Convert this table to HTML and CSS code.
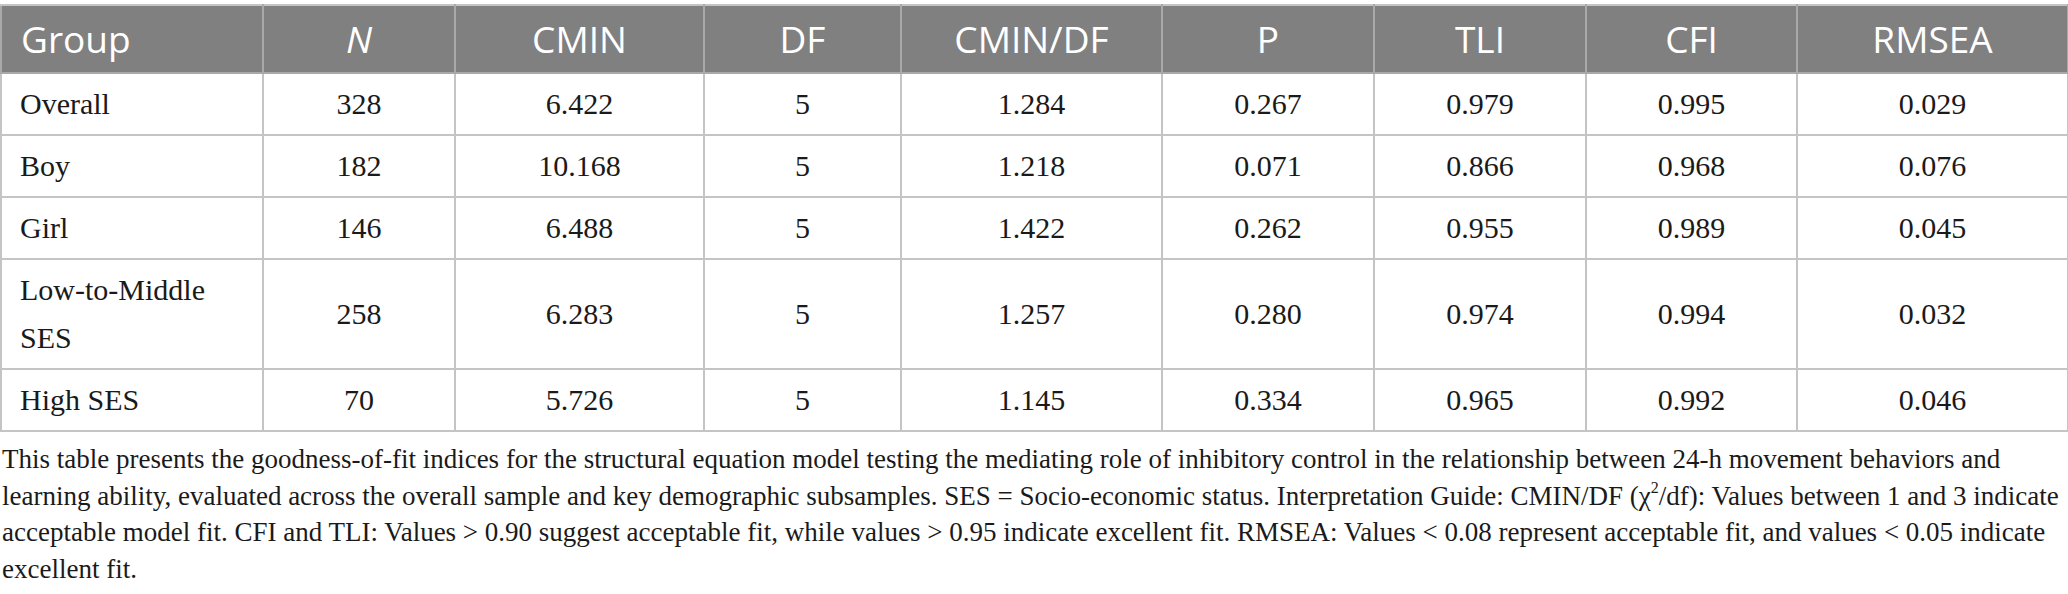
FILE: index.html
```html
<!DOCTYPE html>
<html>
<head>
<meta charset="utf-8">
<link rel="stylesheet" href="styles.css">
</head>
<body>
<div class="page">
<table class="fit-table">
  <colgroup>
    <col class="c-group"><col class="c-n"><col class="c-cmin"><col class="c-df"><col class="c-cmindf"><col class="c-p"><col class="c-tli"><col class="c-cfi"><col class="c-rmsea">
  </colgroup>
  <thead>
    <tr>
      <th class="left">Group</th>
      <th><i>N</i></th>
      <th>CMIN</th>
      <th>DF</th>
      <th>CMIN/DF</th>
      <th>P</th>
      <th>TLI</th>
      <th>CFI</th>
      <th>RMSEA</th>
    </tr>
  </thead>
  <tbody>
    <tr><td class="left">Overall</td><td>328</td><td>6.422</td><td>5</td><td>1.284</td><td>0.267</td><td>0.979</td><td>0.995</td><td>0.029</td></tr>
    <tr><td class="left">Boy</td><td>182</td><td>10.168</td><td>5</td><td>1.218</td><td>0.071</td><td>0.866</td><td>0.968</td><td>0.076</td></tr>
    <tr><td class="left">Girl</td><td>146</td><td>6.488</td><td>5</td><td>1.422</td><td>0.262</td><td>0.955</td><td>0.989</td><td>0.045</td></tr>
    <tr><td class="left narrow">Low-to-Middle SES</td><td>258</td><td>6.283</td><td>5</td><td>1.257</td><td>0.280</td><td>0.974</td><td>0.994</td><td>0.032</td></tr>
    <tr><td class="left">High SES</td><td>70</td><td>5.726</td><td>5</td><td>1.145</td><td>0.334</td><td>0.965</td><td>0.992</td><td>0.046</td></tr>
  </tbody>
</table>
<p class="caption">This table presents the goodness-of-fit indices for the structural equation model testing the mediating role of inhibitory control in the relationship between 24-h movement behaviors and<br>learning ability, evaluated across the overall sample and key demographic subsamples. SES = Socio-economic status. Interpretation Guide: CMIN/DF (χ<sup>2</sup>/df): Values between 1 and 3 indicate<br>acceptable model fit. CFI and TLI: Values &gt; 0.90 suggest acceptable fit, while values &gt; 0.95 indicate excellent fit. RMSEA: Values &lt; 0.08 represent acceptable fit, and values &lt; 0.05 indicate<br>excellent fit.</p>
</div>
</body>
</html>
```

FILE: styles.css
```css
html, body {
  margin: 0;
  padding: 0;
  background: #ffffff;
}

.page {
  padding-top: 4px;
  width: 2068px;
}

.fit-table {
  width: 2067px;
  border-collapse: collapse;
  table-layout: fixed;
  border: 2px solid #c4c4c4;
}

.c-group { width: 262px; }
.c-n { width: 192px; }
.c-cmin { width: 249px; }
.c-df { width: 197px; }
.c-cmindf { width: 261px; }
.c-p { width: 212px; }
.c-tli { width: 212px; }
.c-cfi { width: 211px; }
.c-rmsea { width: 271px; }

.fit-table th {
  background: #808080;
  color: #ffffff;
  font-family: "Open Sans", "Noto Sans", sans-serif;
  font-weight: 400;
  font-size: 37px;
  line-height: 54px;
  padding: 6px 8px 6px 8px;
  text-align: center;
  border: 2px solid #a9a9a9;
  border-top: 2px solid #c4c4c4;
}

.fit-table th i {
  font-style: italic;
}

.fit-table td {
  font-family: "Liberation Serif", "Times New Roman", serif;
  font-size: 30px;
  line-height: 48px;
  color: #1a1a1a;
  padding: 6px 8px;
  text-align: center;
  border: 2px solid #c4c4c4;
}

.fit-table .left {
  text-align: left;
  padding-left: 18px;
}

.fit-table th.left {
  padding-left: 19px;
}

.caption {
  margin: 9px 0 0 0;
  padding: 0 2px;
  font-family: "Liberation Serif", "Times New Roman", serif;
  font-size: 27px;
  line-height: 36.7px;
  color: #1a1a1a;
}

.caption sup {
  font-size: 16px;
  line-height: 0;
  vertical-align: 12px;
}
```
